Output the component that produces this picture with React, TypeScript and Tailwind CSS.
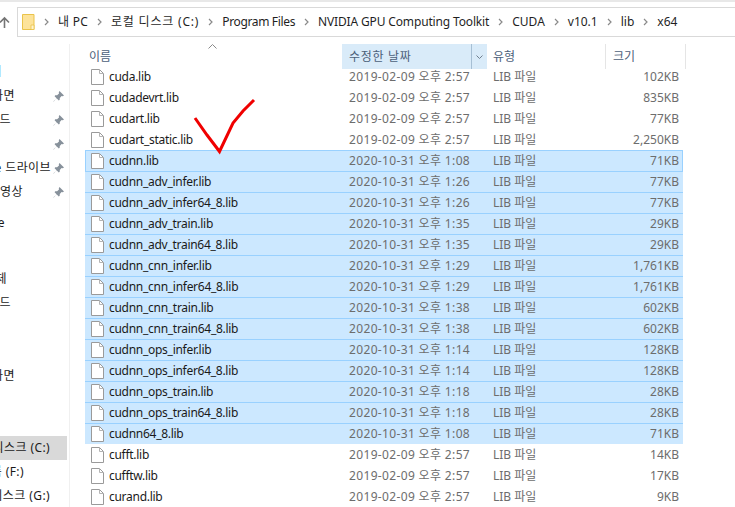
import React from 'react';

const FONT = '"Noto Sans", "Noto Sans CJK KR", sans-serif';

type FileRow = { name: string; date: string; size: string; selected?: boolean };

const OLD = '2019-02-09 오후 2:57';

const files: FileRow[] = [
  { name: 'cuda.lib', date: OLD, size: '102KB' },
  { name: 'cudadevrt.lib', date: OLD, size: '835KB' },
  { name: 'cudart.lib', date: OLD, size: '77KB' },
  { name: 'cudart_static.lib', date: OLD, size: '2,250KB' },
  { name: 'cudnn.lib', date: '2020-10-31 오후 1:08', size: '71KB', selected: true },
  { name: 'cudnn_adv_infer.lib', date: '2020-10-31 오후 1:26', size: '77KB', selected: true },
  { name: 'cudnn_adv_infer64_8.lib', date: '2020-10-31 오후 1:26', size: '77KB', selected: true },
  { name: 'cudnn_adv_train.lib', date: '2020-10-31 오후 1:35', size: '29KB', selected: true },
  { name: 'cudnn_adv_train64_8.lib', date: '2020-10-31 오후 1:35', size: '29KB', selected: true },
  { name: 'cudnn_cnn_infer.lib', date: '2020-10-31 오후 1:29', size: '1,761KB', selected: true },
  { name: 'cudnn_cnn_infer64_8.lib', date: '2020-10-31 오후 1:29', size: '1,761KB', selected: true },
  { name: 'cudnn_cnn_train.lib', date: '2020-10-31 오후 1:38', size: '602KB', selected: true },
  { name: 'cudnn_cnn_train64_8.lib', date: '2020-10-31 오후 1:38', size: '602KB', selected: true },
  { name: 'cudnn_ops_infer.lib', date: '2020-10-31 오후 1:14', size: '128KB', selected: true },
  { name: 'cudnn_ops_infer64_8.lib', date: '2020-10-31 오후 1:14', size: '128KB', selected: true },
  { name: 'cudnn_ops_train.lib', date: '2020-10-31 오후 1:18', size: '28KB', selected: true },
  { name: 'cudnn_ops_train64_8.lib', date: '2020-10-31 오후 1:18', size: '28KB', selected: true },
  { name: 'cudnn64_8.lib', date: '2020-10-31 오후 1:08', size: '71KB', selected: true },
  { name: 'cufft.lib', date: OLD, size: '14KB' },
  { name: 'cufftw.lib', date: OLD, size: '17KB' },
  { name: 'curand.lib', date: OLD, size: '9KB' },
];

// the window is cropped on the left, so labels are placed by where they end
const navItems: { label: string; end: number; cls?: string; pin?: boolean; active?: boolean }[] = [
  { label: '바로 가기', end: 2 },
  { label: '바탕 화면', end: 15, pin: true },
  { label: '다운로드', end: 11, pin: true },
  { label: '문서', end: 0, pin: true },
  { label: 'e 드라이브', end: 51, pin: true },
  { label: '동영상', end: 23, pin: true },
  { label: 'OneDrive', end: 5, cls: 'mt-[7px]' },
  { label: '3D 개체', end: 7, cls: 'mt-[32px]' },
  { label: '다운로드', end: 11 },
  { label: '바탕 화면', end: 15, cls: 'mt-[49px]' },
  { label: '로컬 디스크 (C:)', end: 50, cls: 'mt-[48px]', active: true },
  { label: '볼륨 (F:)', end: 24 },
  { label: '로컬 디스크 (G:)', end: 50 },
];

const Sep = () => (
  <svg width="5" height="8" viewBox="0 0 5 8" className="shrink-0">
    <path d="M1 1l3 3-3 3" fill="none" stroke="#8a8a8a" strokeWidth="1.2" />
  </svg>
);

const FileIcon = () => (
  <svg width="13" height="16" viewBox="0 0 13 16" className="shrink-0">
    <path d="M.5.5h8l4 4v11H.5z" fill="#fff" stroke="#9a9a9a" />
    <path d="M8.5.5v4h4" fill="none" stroke="#b4b4b4" />
  </svg>
);

const Pin = () => (
  <svg width="11" height="11" viewBox="0 0 11 11" className="shrink-0">
    <path d="M6.5 0L11 4.5 9.8 5.2 8.6 5 6.8 6.9 6.7 8.8 5.8 9.4 3.6 7.2.8 10.6.4 10.2 3.8 7.4 1.6 5.2 2.2 4.3 4.1 4.2 6 2.4 5.8 1.2z" fill="#87919b" />
  </svg>
);

export default function App() {
  return (
    <div className="relative w-[735px] h-[507px] overflow-hidden bg-white text-[12px]" style={{ fontFamily: FONT }}>
      {/* toolbar strip */}
      <div className="h-[2px] bg-[#e8e8e8]" />

      <div className="flex items-start h-[42px] pt-[5px]">
        <svg width="12" height="12" viewBox="0 0 12 12" className="ml-[-1px] mt-[9px] shrink-0">
          <path d="M5.5 12V2M1 6.5l4.500-4.500L10 6.500" fill="none" stroke="#757575" strokeWidth="1.6" />
        </svg>
        <div className="ml-[6px] flex items-center h-[30px] w-[718px] border border-[#d9d9d9] border-r-0 pl-[4px] text-[#1f1f1f]">
          <svg width="13" height="16" viewBox="0 0 13 16" className="shrink-0">
            <path d="M.5.5h11.500v15H.5z" fill="#fde39a" stroke="#eac34a" />
            <path d="M9 11h3v4.500H9z" fill="#fff4cf" stroke="#eac34a" strokeWidth=".8" />
          </svg>
          <div className="ml-[9px] flex items-center gap-[9px]">
            <Sep />
            <span className="tracking-[0.25px]">내 PC</span>
            <Sep />
            <span className="tracking-[0.8px]">로컬 디스크 (C:)</span>
            <Sep />
            <span className="tracking-[-0.35px]">Program Files</span>
            <Sep />
            <span className="tracking-[-0.15px]">NVIDIA GPU Computing Toolkit</span>
            <Sep />
            <span>CUDA</span>
            <Sep />
            <span>v10.1</span>
            <Sep />
            <span>lib</span>
            <Sep />
            <span>x64</span>
          </div>
        </div>
      </div>

      <div className="flex">
        {/* nav pane */}
        <div className="w-[70px] h-[463px] overflow-hidden border-r border-[#f0f0f0] text-[#1a1a1a] shrink-0 pt-[16px]">
          {navItems.map((n, i) => (
            <div
              key={i}
              className={
                'flex items-center justify-between h-[24px] pr-[5px] ' +
                (n.active ? 'w-[67px] bg-[#d9d9d9] ' : 'w-[69px] ') +
                (n.cls ?? '')
              }
            >
              <div className="flex justify-end shrink-0" style={{ width: n.end }}>
                <span className="whitespace-nowrap tracking-[0.4px]">{n.label}</span>
              </div>
              {n.pin && <Pin />}
            </div>
          ))}
        </div>

        {/* file list */}
        <div className="flex-1 min-w-0 pl-[15px]">
          <div className="relative flex h-[25px] text-[#4c607a]">
            <svg width="9" height="5" viewBox="0 0 9 5" className="absolute left-[123px] top-0">
              <path d="M.5 4.500l4-4 4 4" fill="none" stroke="#8a8a8a" />
            </svg>
            <div className="w-[257px] pl-[4px] flex items-center">이름</div>
            <div className="w-[129px] bg-[#d9ebf9] pl-[7px] flex items-center tracking-[0.7px]">수정한 날짜</div>
            <div className="w-[16px] bg-[#d9ebf9] border-l border-[#a6bfd4] flex items-center justify-center">
              <svg width="7" height="4" viewBox="0 0 7 4">
                <path d="M.5.5l3 3 3-3" fill="none" stroke="#6f7f8f" />
              </svg>
            </div>
            <div className="w-[119px] pl-[6px] flex items-center border-r border-[#e5e5e5]">유형</div>
            <div className="w-[80px] pl-[7px] flex items-center border-r border-[#e5e5e5]">크기</div>
          </div>
          <div className="h-[438px] overflow-hidden">
            <div className="w-[598px] mt-[-3px]">
              {files.map((f) => (
                <div
                  key={f.name}
                  className={
                    f.name === 'cudnn.lib'
                      ? 'flex items-center h-[21px] bg-[#cce8ff] border border-b-0 border-[#99d1ff]'
                      : f.selected
                        ? 'flex items-center h-[21px] bg-[#cce8ff] border-t border-[#99d1ff]'
                        : 'flex items-center h-[21px]'
                  }
                >
                  <div className={(f.name === 'cudnn.lib' ? 'w-[256px] pl-[5px]' : 'w-[257px] pl-[6px]') + ' flex items-center gap-[5px] text-[#1a1a1a]'}>
                    <FileIcon />
                    <span className="whitespace-nowrap tracking-[-0.28px]">{f.name}</span>
                  </div>
                  <div className="w-[151px] pl-[7px] text-[#6d6d6d] whitespace-nowrap tracking-[0.35px]">{f.date}</div>
                  <div className="w-[100px] text-[#6d6d6d] whitespace-nowrap">LIB 파일</div>
                  <div className="w-[86px] text-right text-[#6d6d6d]">{f.size}</div>
                </div>
              ))}
            </div>
          </div>
        </div>
      </div>

      {/* hand-drawn check mark over the list */}
      <svg width="735" height="507" className="absolute inset-0 pointer-events-none">
        <path d="M195 118L207 135 219.500 151.500 233 123 243 111 254 100" fill="none" stroke="#f00000" strokeWidth="3" />
      </svg>
    </div>
  );
}
